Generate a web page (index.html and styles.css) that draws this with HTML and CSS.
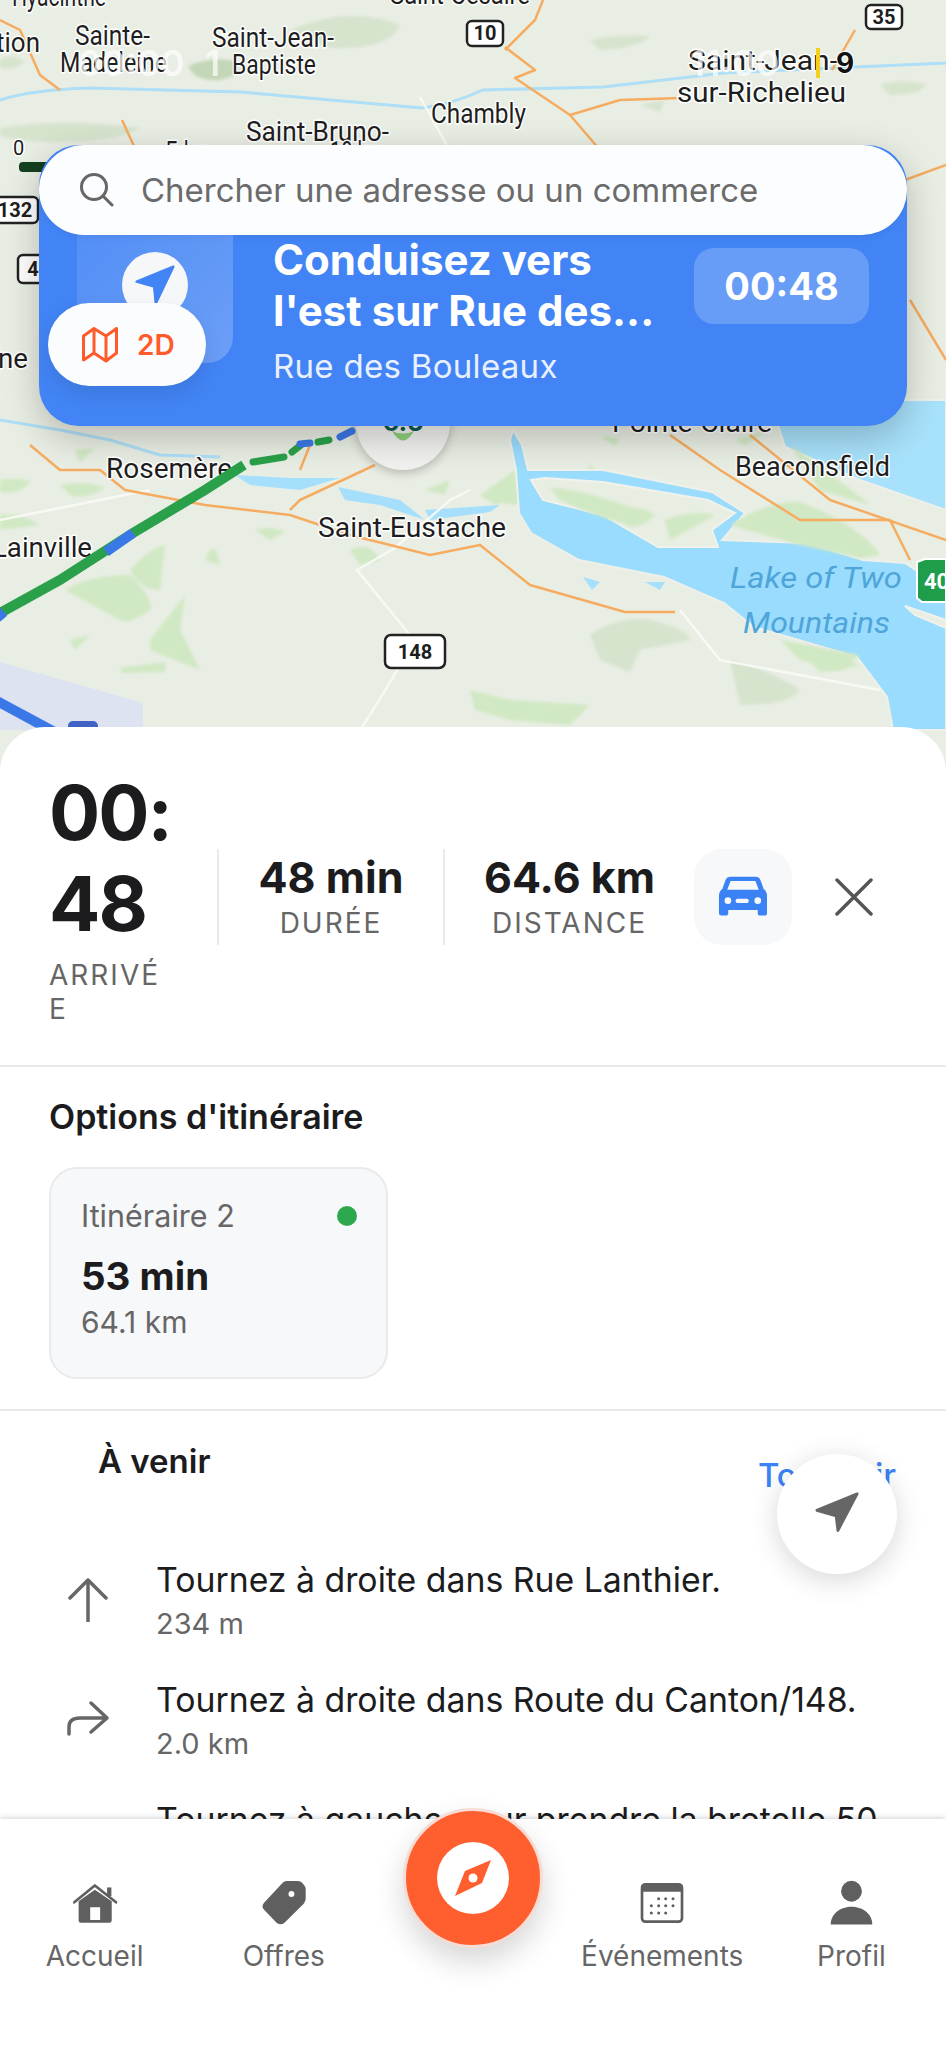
FILE: index.html
```html
<!DOCTYPE html>
<html lang="fr">
<head>
<meta charset="utf-8">
<title>Navigation</title>
<link rel="stylesheet" href="styles.css">
</head>
<body>
<div class="app">
  <section class="map">
    <svg class="map-art" viewBox="0 0 946 780" width="946" height="780" xmlns="http://www.w3.org/2000/svg">
      <rect class="land" x="0" y="0" width="946" height="780"/>
      <g class="soft">
        <path class="green-dim" d="M290 30 Q350 5 400 25 Q390 50 330 48 Z"/>
        <path class="green-dark" d="M188 66 Q215 55 238 62 Q242 76 220 80 Q195 82 188 66 Z"/>
        <path class="green-dim" d="M0 128 Q60 118 140 128 Q120 142 50 142 Q20 142 0 136 Z"/>
        <path class="green-dim" d="M590 40 Q620 34 650 36 Q640 48 600 50 Z"/>
        <path class="green-dim" d="M880 85 Q900 78 925 84 Q925 94 890 95 Z"/>
        <path class="green-dim" d="M640 105 L665 100 L660 112 Z"/>
        <path class="green-dim" d="M0 60 Q12 52 25 62 Q15 70 0 68 Z"/>
        <path class="green-dim" d="M600 38 Q610 34 620 40 L610 44 Z"/>
        <path class="green" d="M75 450 L95 448 L80 462 Z"/>
        <path class="green" d="M60 485 Q85 480 105 488 Q85 500 70 495 Z"/>
        <path class="green" d="M0 480 Q20 476 30 482 Q20 495 0 492 Z"/>
        <path class="green" d="M0 515 Q20 512 40 525 L0 530 Z"/>
        <path class="green" d="M160 590 L165 545 Q150 548 130 570 Q140 590 160 590 Z"/>
        <path class="green" d="M65 590 Q90 575 130 575 Q155 600 150 610 Q130 625 120 620 Z"/>
        <path class="green" d="M150 640 L185 595 L180 630 L200 670 Q175 660 150 650 Z"/>
        <path class="green" d="M120 668 L165 662 L165 672 L122 673 Z"/>
        <path class="green" d="M70 640 L90 635 L75 650 Z"/>
        <path class="green" d="M205 560 Q215 535 220 565 Z"/>
        <path class="green" d="M255 530 Q270 525 285 532 L270 540 Z"/>
        <path class="green" d="M425 490 L450 480 L445 495 Z"/>
        <path class="green" d="M480 495 L515 470 L520 495 L495 505 Z"/>
        <path class="green" d="M485 500 L525 495 L515 505 Z"/>
        <path class="green" d="M350 550 Q370 540 380 560 L360 565 Z"/>
        <path class="green-dim" d="M590 635 Q620 615 650 620 Q690 630 690 640 L640 650 L630 672 L600 660 Z"/>
        <path class="green" d="M470 690 L510 700 L590 705 L570 725 L510 720 L475 710 Z"/>
        <path class="green-dim" d="M730 660 Q770 670 800 690 Q790 705 740 705 Z"/>
        <path class="green" d="M800 650 Q830 650 860 665 L840 670 L820 672 Z"/>
        <path class="green" d="M590 465 L600 475 L585 480 Z"/>
        <path class="green" d="M735 440 L770 430 L745 445 Z"/>
        <path class="green" d="M600 436 L620 438 L615 446 Z"/>
        <path class="green" d="M505 700 L520 705 L510 715 Z"/>
      </g>
      <path class="lavender" d="M0 662 L143 703 L143 730 L0 730 Z"/>
      <path class="water-light" d="M770 400 L785 447 L860 480 L946 510 L946 400 Z"/>
      <path class="water" d="M513 430 L522 445 L528 470 L603 470 L712 492 L745 513 L722 540 L809 543 L863 560 L905 563 L946 590 L946 730 L893 730 L887 697 L857 657 L754 627 L724 603 L664 577 L579 560 L531 533 L519 513 L516 470 L510 440 Z"/>
      <path class="shore" d="M531 480 L543 500 L603 515 L658 547 L718 547 L712 530 L735 513 L708 500 L603 482 L545 478 Z"/>
      <path class="shore" d="M905 606 L946 620 L946 628 L915 615 Z"/>
      <g class="soft">
        <path class="green" d="M550 488 Q590 490 650 515 L630 525 Q590 515 560 500 Z"/>
        <path class="green" d="M615 508 Q640 505 655 515 Q640 530 625 525 Z"/>
        <path class="green" d="M665 520 Q690 510 715 515 L670 540 Z"/>
        <path class="green" d="M730 525 Q770 500 800 502 Q860 525 880 555 L860 558 L800 545 Z"/>
        <path class="green" d="M780 640 L860 655 L840 670 L800 660 Z"/>
        <path class="green" d="M790 445 Q840 480 870 505 L820 490 Z"/>
      </g>
      <g class="rivers">
        <path d="M0 100 Q30 90 90 88 L241 92 L422 108 Q450 105 483 90 L603 87 L724 73 L946 63"/>
        <path d="M0 420 L60 430 L110 440 L160 455 L220 457"/>
      </g>
      <g class="lakes">
        <path d="M338 487 L400 500 L425 520 L380 505 L345 500 Z"/>
        <path d="M235 475 L290 478 L340 478 L300 490 L250 485 Z"/>
        <path d="M425 510 L500 505 L490 512 L430 520 Z"/>
        <path d="M583 577 L600 582 L592 590 Z"/>
        <path d="M645 582 L665 582 L660 590 Z"/>
      </g>
      <g class="roads-white">
        <path d="M420 97 L455 160 L460 145"/>
        <path d="M400 665 Q380 700 360 730"/>
        <path d="M410 635 L357 570 L395 548 L450 500 L470 490"/>
        <path d="M0 520 L150 490"/>
        <path d="M680 610 L720 660 L880 690"/>
      </g>
      <g class="roads">
        <path d="M0 20 L20 30 L40 75 L60 90"/>
        <path d="M122 120 L145 170 L170 205"/>
        <path d="M505 50 L535 20 L543 0"/>
        <path d="M505 47 L535 70 L515 78 L570 115 L600 150"/>
        <path d="M570 115 L620 100 L680 98"/>
        <path d="M832 70 L855 30"/>
        <path d="M905 180 L946 165"/>
        <path d="M910 300 L946 360"/>
        <path d="M310 445 L300 470"/>
        <path d="M30 445 L60 470 L100 470 L125 490 L205 505 L290 515 L350 535 L430 555 L480 545 L530 585 L625 612 L675 612"/>
        <path d="M290 510 L300 500 L375 465"/>
        <path d="M670 435 L720 470 L800 520 L890 520 L910 560"/>
        <path d="M750 435 L830 500 L946 540"/>
      </g>

      <g class="marker">
        <circle class="marker-body" cx="403" cy="423" r="47"/>
        <text class="marker-text" x="403" y="431" text-anchor="middle">6.5</text>
        <path class="marker-smile" d="M392 431 Q403 450 414 431 Q403 436 392 431 Z"/>
      </g>

      <g class="labels">
        <text x="12" y="6" textLength="94" lengthAdjust="spacingAndGlyphs">Hyacinthe</text>
        <text x="-4" y="52" textLength="44" lengthAdjust="spacingAndGlyphs">tion</text>
        <text x="75" y="45" textLength="75" lengthAdjust="spacingAndGlyphs">Sainte-</text>
        <text x="60" y="72" textLength="107" lengthAdjust="spacingAndGlyphs">Madeleine</text>
        <text x="212" y="47" textLength="122" lengthAdjust="spacingAndGlyphs">Saint-Jean-</text>
        <text x="232" y="74" textLength="84" lengthAdjust="spacingAndGlyphs">Baptiste</text>
        <text x="390" y="4" textLength="140" lengthAdjust="spacingAndGlyphs">Saint-Césaire</text>
        <text x="688" y="70" textLength="150" lengthAdjust="spacingAndGlyphs">Saint-Jean-</text>
        <text x="677" y="102" textLength="169" lengthAdjust="spacingAndGlyphs">sur-Richelieu</text>
        <text x="431" y="123" textLength="95" lengthAdjust="spacingAndGlyphs">Chambly</text>
        <text x="246" y="141" textLength="143" lengthAdjust="spacingAndGlyphs">Saint-Bruno-</text>
        <text x="166" y="161" textLength="44" lengthAdjust="spacingAndGlyphs">Eden</text>
        <text x="330" y="161" textLength="55" lengthAdjust="spacingAndGlyphs">10 km</text>
        <text x="-2" y="368" textLength="30" lengthAdjust="spacingAndGlyphs">ne</text>
        <text x="106" y="478" textLength="126" lengthAdjust="spacingAndGlyphs">Rosemère</text>
        <text x="735" y="476" textLength="155" lengthAdjust="spacingAndGlyphs">Beaconsfield</text>
        <text x="612" y="432" textLength="160" lengthAdjust="spacingAndGlyphs">Pointe-Claire</text>
        <text x="318" y="537" textLength="188" lengthAdjust="spacingAndGlyphs">Saint-Eustache</text>
        <text x="-8" y="557" textLength="100" lengthAdjust="spacingAndGlyphs">Lainville</text>
        <text class="scale" x="13" y="155">0</text>
      </g>
      <g class="lake-labels">
        <text x="730" y="588" textLength="172" lengthAdjust="spacingAndGlyphs">Lake of Two</text>
        <text x="743" y="633" textLength="147" lengthAdjust="spacingAndGlyphs">Mountains</text>
      </g>

      <g class="route">
        <path class="rt-green rt-main" d="M0 613 L60 580 L133 533 L205 490 L244 465"/>
        <path class="rt-blue rt-main" d="M106 552 L133 533"/>
        <path class="rt-blue rt-main" d="M-8 622 L4 612"/>
        <path class="rt-green" d="M253 462 L284 457"/>
        <path class="rt-green" d="M292 452 L301 445"/>
        <path class="rt-blue" d="M300 444 L310 443"/>
        <path class="rt-green" d="M318 442 L329 440"/>
        <path class="rt-blue" d="M340 437 L352 431"/>
        <path class="rt-blue rt-main" d="M-5 700 L60 735"/>
      </g>
      <rect class="rt-badge" x="68" y="721" width="30" height="30" rx="5"/>

      <rect class="scale-bar" x="19" y="162" width="40" height="10" rx="4"/>

      <g class="shields">
        <rect x="467" y="21" width="36" height="25" rx="5"/><text x="485" y="40" text-anchor="middle">10</text>
        <rect x="866" y="5" width="36" height="24" rx="5"/><text x="884" y="24" text-anchor="middle">35</text>
        <rect x="-8" y="197" width="46" height="26" rx="5"/><text x="15" y="217" text-anchor="middle">132</text>
        <rect x="18" y="255" width="30" height="28" rx="5"/><text x="33" y="276" text-anchor="middle">4</text>
        <rect x="385" y="635" width="60" height="33" rx="6"/><text x="415" y="659" text-anchor="middle">148</text>
      </g>
      <path class="shield-green" d="M917 562 L925 559 L946 559 L946 602 L922 602 L917 598 Z"/>
      <text class="shield-green-text" x="924" y="589">40</text>

      <g class="status">
        <text class="status-ghost" x="78" y="76">00:00</text>
        <text class="status-ghost" x="205" y="76">1</text>
        <text class="status-ghost" x="690" y="76">11:00</text>
        <rect class="status-bar" x="816" y="48" width="4" height="30"/>
        <text class="status-nine" x="836" y="73">9</text>
      </g>
    </svg>

    <div class="banner">
      <div class="search">
        <svg class="search-icon" viewBox="0 0 34 34" width="34" height="34"><circle cx="14" cy="14" r="12.5"/><path d="M23.5 23.5 L32 32"/></svg>
        <span class="search-text">Chercher une adresse ou un commerce</span>
      </div>
      <div class="tile">
        <span class="tile-circle">
          <svg viewBox="0 0 48 48" width="40" height="40"><path class="nav-fill-blue" d="M46 2 L2 20 L23 26 L25 46 Z"/></svg>
        </span>
      </div>
      <div class="banner-text">
        <div class="banner-title">Conduisez vers<br>l'est sur Rue des...</div>
        <div class="banner-sub">Rue des Bouleaux</div>
      </div>
      <div class="chip">00:48</div>
      <div class="mode-pill">
        <svg class="mode-icon" viewBox="0 0 36 36" width="36" height="36"><path d="M1.500 9 L12 1.500 L24 9 L34.500 1.500 L34.500 26 L24 34 L12 26 L1.500 33 Z M12 1.500 L12 26 M24 9 L24 34"/></svg>
        <span class="mode-text">2D</span>
      </div>
    </div>
  </section>

  <main class="sheet">
    <section class="trip">
      <div class="arrival">
        <div class="arrival-time">00:<wbr>48</div>
        <div class="arrival-label">ARRIVÉE</div>
      </div>
      <div class="stat stat-duration">
        <div class="stat-value">48 min</div>
        <div class="stat-label">DURÉE</div>
      </div>
      <div class="stat stat-distance">
        <div class="stat-value">64.6 km</div>
        <div class="stat-label">DISTANCE</div>
      </div>
      <div class="car-btn">
        <svg viewBox="100 160 175 135" width="58" height="45"><path class="car-fill" d="M150 168 L225 168 Q236 168 240 178 L250 205 Q260 212 260 226 L260 278 Q260 285 252 285 L240 285 Q232 285 232 278 L232 268 L143 268 L143 278 Q143 285 135 285 L122 285 Q115 285 115 278 L115 226 Q115 212 125 205 L135 178 Q139 168 150 168 Z"/><path class="car-cut" d="M150 181 L225 181 L235 207 L140 207 Z"/><circle class="car-cut" cx="142" cy="240" r="10"/><circle class="car-cut" cx="232" cy="240" r="10"/><rect class="car-cut" x="165" y="234" width="40" height="13" rx="6"/></svg>
      </div>
      <div class="close-btn">
        <svg viewBox="0 0 38 38" width="38" height="38"><path d="M2 2 L36 36 M36 2 L2 36"/></svg>
      </div>
    </section>

    <section class="options">
      <h2 class="options-title">Options d'itinéraire</h2>
      <div class="route-card">
        <div class="route-card-head"><span class="route-name">Itinéraire 2</span><span class="route-dot"></span></div>
        <div class="route-time">53 min</div>
        <div class="route-dist">64.1 km</div>
      </div>
    </section>

    <section class="upcoming">
      <div class="upcoming-head">
        <h2 class="upcoming-title">À venir</h2>
        <span class="see-all">Tout voir</span>
      </div>
      <ul class="steps">
        <li class="step">
          <svg class="step-icon" viewBox="0 0 44 44" width="44" height="44"><path d="M22 43 L22 2 M4 20 L22 2 L40 20"/></svg>
          <div><div class="step-title">Tournez à droite dans Rue Lanthier.</div><div class="step-dist">234 m</div></div>
        </li>
        <li class="step">
          <svg class="step-icon" viewBox="0 0 44 44" width="44" height="44"><path d="M3 36 L3 29 Q3 20 14 20 L41 20 M25 5 L41 20 L25 34"/></svg>
          <div><div class="step-title">Tournez à droite dans Route du Canton/148.</div><div class="step-dist">2.0 km</div></div>
        </li>
        <li class="step">
          <svg class="step-icon" viewBox="0 0 44 44" width="44" height="44"></svg>
          <div><div class="step-title">Tournez à gauche pour prendre la bretelle 50</div><div class="step-dist">1.2 km</div></div>
        </li>
      </ul>
    </section>

    <button class="locate-fab" type="button" aria-label="Recentrer">
      <svg viewBox="0 0 48 48" width="48" height="44"><path class="nav-fill-gray" d="M46 2 L2 20 L23 26 L25 42 Z"/></svg>
    </button>
  </main>

  <nav class="tabbar">
    <a class="tab">
      <svg class="tab-icon" viewBox="120 180 145 130" width="48" height="43"><path class="tab-fill" d="M143 240 L192 205 L243 240 L243 298 Q243 305 236 305 L150 305 Q143 305 143 298 Z M178 258 L178 296 L208 296 L208 258 Z" fill-rule="evenodd"/><path class="tab-line" d="M130 243 L192 192 L256 243"/><rect class="tab-fill" x="229" y="198" width="13" height="26"/></svg>
      <span class="tab-label">Accueil</span>
    </a>
    <a class="tab">
      <svg class="tab-icon" viewBox="690 172 145 145" width="48" height="48"><path class="tab-fill" fill-rule="evenodd" d="M770 178 L805 178 Q815 178 820 186 L826 195 Q828 198 828 204 L828 232 Q828 240 822 247 L764 304 Q752 314 740 304 L703 266 Q692 255 703 243 L755 187 Q762 178 770 178 Z M785 208 A9 9 0 1 0 785 226 A9 9 0 1 0 785 208 Z"/></svg>
      <span class="tab-label">Offres</span>
    </a>
    <div class="tab tab-center">
      <span class="compass-btn">
        <span class="compass-face">
          <svg viewBox="-24 -24 48 48" width="48" height="48"><path class="compass-needle" d="M18 -18 L9 5 L-18 18 L-8 -7 Z"/><circle class="compass-dot" cx="0" cy="0" r="4.500"/></svg>
        </span>
      </span>
    </div>
    <a class="tab">
      <svg class="tab-icon" viewBox="236 241 138 130" width="46" height="43"><rect class="cal-frame" x="245" y="250" width="120" height="112" rx="10"/><path class="tab-fill" d="M245 260 Q245 250 255 250 L355 250 Q365 250 365 260 L365 272 L245 272 Z"/><g class="tab-fill"><circle cx="295" cy="293" r="4.500"/><circle cx="316" cy="293" r="4.500"/><circle cx="338" cy="293" r="4.500"/><circle cx="273" cy="314" r="4.500"/><circle cx="295" cy="314" r="4.500"/><circle cx="316" cy="314" r="4.500"/><circle cx="338" cy="314" r="4.500"/><circle cx="273" cy="336" r="4.500"/><circle cx="295" cy="336" r="4.500"/><circle cx="316" cy="336" r="4.500"/></g></svg>
      <span class="tab-label">Événements</span>
    </a>
    <a class="tab">
      <svg class="tab-icon" viewBox="805 235 140 140" width="47" height="47"><circle class="tab-fill" cx="875" cy="270" r="31"/><path class="tab-fill" d="M813 369 C813 335 845 316 875 316 C905 316 937 335 937 369 Z"/></svg>
      <span class="tab-label">Profil</span>
    </a>
  </nav>
</div>
</body>
</html>
```

FILE: styles.css
```css
* { box-sizing: border-box; }
html, body { margin: 0; padding: 0; background: #fff; }
body { font-family: Inter, "Noto Sans", "Liberation Sans", sans-serif; color: #1c1c1e; }

.app { width: 946px; height: 2047px; overflow: hidden; display: flex; flex-direction: column; position: relative; }

/* map */
.map { position: relative; height: 780px; flex: none; overflow: visible; }
.map-art { display: block; }
.land { fill: #e9eee4; }
.soft { filter: blur(1.500px); }
.green { fill: #d0e8c3; }
.green-dim { fill: #d6e3cd; }
.green-dark { fill: #c3d6b7; }
.water { fill: #9adcfd; stroke: #eef0ea; stroke-width: 2; }
.water-light { fill: #a8e1fb; stroke: #eef0ea; stroke-width: 2; }
.shore { fill: #e8eee2; stroke: #f1f2ec; stroke-width: 2; }
.lavender { fill: #dde3f1; }
.rivers path { fill: none; stroke: #aedff6; stroke-width: 3; stroke-linejoin: round; }
.lakes path { fill: #a6dffc; }
.roads-white path { fill: none; stroke: #fafaf7; stroke-width: 2.500; opacity: .85; }
.roads path { fill: none; stroke: #f6ac60; stroke-width: 2.500; stroke-linejoin: round; }
.route path { fill: none; stroke-linecap: round; stroke-width: 7; }
.route .rt-main { stroke-linecap: butt; stroke-width: 10; }
.rt-green { stroke: #2aa04a; }
.rt-blue { stroke: #3b78e7; }
.rt-badge { fill: #3f63c4; }
.marker-body { fill: #f1f1ef; filter: drop-shadow(0 3px 5px rgba(0,0,0,.22)); }
.marker-text { font: 700 26px Inter, sans-serif; fill: #0e5a54; }
.marker-smile { fill: #8ed07c; }
.labels text { font: 400 28px Roboto, sans-serif; fill: #1e1e1e; stroke: #fff; stroke-width: 3; paint-order: stroke; stroke-linejoin: round; }
.labels .scale { font-size: 20px; }
.lake-labels text { font: italic 400 30px Roboto, sans-serif; fill: #4fa5d9; }
.scale-bar { fill: #14401f; }
.shields rect { fill: #fff; stroke: #222; stroke-width: 2.500; }
.shields text { font: 700 20px Roboto, sans-serif; fill: #1e1e1e; }
.shield-green { fill: #1f9d4a; stroke: #fff; stroke-width: 2; }
.shield-green-text { font: 700 22px Roboto, sans-serif; fill: #fff; }
.status-ghost { font: 600 36px Inter, sans-serif; fill: #fff; opacity: .7; }
.status-bar { fill: #f5cf1d; }
.status-nine { font: 700 28px Inter, sans-serif; fill: #111; stroke: #fff; stroke-width: 2; paint-order: stroke; }

/* banner */
.banner { position: absolute; left: 39px; top: 145px; width: 868px; height: 281px; border-radius: 40px; background: #4284f5; box-shadow: 0 12px 36px rgba(0,0,0,.22); display: flex; align-items: flex-start; padding: 62px 38px 0; }
.search { position: absolute; z-index: 2; left: 0; top: 0; width: 868px; height: 90px; border-radius: 45px; background: #fcfdfe; display: flex; align-items: center; padding-left: 41px; gap: 27px; box-shadow: 0 2px 6px rgba(0,0,0,.06); }
.search-icon { flex: none; }
.search-icon circle, .search-icon path { fill: none; stroke: #666; stroke-width: 3; stroke-linecap: round; }
.search-text { font-size: 33px; color: #6b6b6b; white-space: nowrap; }
.tile { width: 156px; height: 156px; flex: none; border-radius: 26px; background: linear-gradient(135deg, rgba(255,255,255,.08), rgba(255,255,255,.22)); display: flex; align-items: center; justify-content: center; }
.tile-circle { width: 66px; height: 66px; border-radius: 50%; background: #f6f7f8; display: flex; align-items: center; justify-content: center; }
.nav-fill-blue { fill: #4284f5; stroke: #4284f5; stroke-width: 3; stroke-linejoin: round; }
.banner-text { margin-left: 40px; margin-top: 27px; flex: 1; min-width: 0; }
.banner-title { font-size: 42px; font-weight: 700; line-height: 51px; color: #fff; white-space: nowrap; }
.banner-sub { font-size: 33px; line-height: 40px; letter-spacing: .3px; color: #e8f0fe; margin-top: 10px; white-space: nowrap; }
.chip { flex: none; width: 175px; height: 76px; margin-top: 41px; border-radius: 20px; background: rgba(255,255,255,.2); color: #fff; font-size: 38px; font-weight: 700; display: flex; align-items: center; justify-content: center; }
.mode-pill { position: absolute; z-index: 3; left: 9px; top: 158px; width: 158px; height: 83px; border-radius: 42px; background: #fbfcfd; display: flex; align-items: center; gap: 19px; padding-left: 34px; box-shadow: 0 8px 20px rgba(0,0,0,.1); }
.mode-icon path { fill: none; stroke: #ff5a2b; stroke-width: 3; stroke-linejoin: round; }
.mode-text { font-size: 28px; font-weight: 600; color: #ff5a2b; }

/* sheet */
.sheet { position: relative; z-index: 1; flex: none; height: 1092px; margin-top: -53px; background: #fff; border-radius: 45px 45px 0 0; overflow: hidden; }
.trip { display: flex; align-items: center; padding: 40px 0 39px 49px; border-bottom: 2px solid #e8eaec; }
.arrival { width: 119px; flex: none; margin-right: 49px; }
.arrival-time { font-size: 76px; line-height: 91px; font-weight: 700; letter-spacing: -2px; color: #1c1c1e; }
.arrival-label { font-size: 28px; line-height: 34px; margin-top: 9px; letter-spacing: 2px; color: #666; overflow-wrap: anywhere; }
.stat { height: 96px; flex: none; border-left: 2px solid #e8eaec; display: flex; flex-direction: column; align-items: center; justify-content: center; }
.stat-duration { width: 226px; }
.stat-distance { width: 251px; }
.stat-value { font-size: 43px; line-height: 48px; font-weight: 700; color: #1c1c1e; white-space: nowrap; }
.stat-label { font-size: 28px; line-height: 36px; letter-spacing: 2px; color: #666; margin-top: 4px; }
.car-btn { width: 98px; height: 96px; flex: none; border-radius: 28px; background: #f6f8fa; display: flex; align-items: center; justify-content: center; }
.car-fill { fill: #3b82f6; }
.car-cut { fill: #f6f8fa; }
.close-btn { width: 96px; height: 96px; flex: none; margin-left: 14px; display: flex; align-items: center; justify-content: center; }
.close-btn path { fill: none; stroke: #555; stroke-width: 3.500; stroke-linecap: round; }

.options { padding: 30px 49px 30px; border-bottom: 2px solid #e8eaec; }
.options-title { margin: 0 0 30px; font-size: 34px; line-height: 40px; font-weight: 600; color: #1c1c1e; }
.route-card { width: 339px; height: 212px; border: 2px solid #e8eaec; border-radius: 28px; background: #f7f8fa; padding: 29px 29px 0 30px; }
.route-card-head { display: flex; align-items: center; justify-content: space-between; }
.route-name { font-size: 30.500px; line-height: 36px; color: #666; }
.route-dot { width: 20px; height: 20px; border-radius: 50%; background: #2ea84f; }
.route-time { font-size: 38.500px; line-height: 48px; font-weight: 700; margin-top: 18px; color: #1c1c1e; }
.route-dist { font-size: 30px; line-height: 36px; margin-top: 4px; color: #666; }

.upcoming { padding-top: 30px; }
.upcoming-head { display: flex; justify-content: space-between; align-items: flex-start; padding: 0 50px 0 98px; }
.upcoming-title { margin: 0; font-size: 33px; line-height: 40px; font-weight: 600; color: #1c1c1e; }
.see-all { font-size: 33px; line-height: 40px; margin-top: 14px; color: #3b82f6; font-weight: 500; }
.steps { list-style: none; margin: 63px 0 0; padding: 0 0 0 66px; display: flex; flex-direction: column; gap: 36px; }
.step { display: flex; align-items: center; gap: 46px; }
.step-icon { flex: none; }
.step-icon path { fill: none; stroke: #666; stroke-width: 3.500; stroke-linecap: round; stroke-linejoin: round; }
.step-title { font-size: 33.800px; line-height: 44px; color: #1c1c1e; white-space: nowrap; }
.step-dist { font-size: 29px; line-height: 36px; margin-top: 4px; color: #666; }

.locate-fab { position: absolute; left: 777px; top: 727px; width: 120px; height: 120px; border: 0; border-radius: 50%; background: #fff; box-shadow: 0 6px 28px rgba(0,0,0,.16); display: flex; align-items: center; justify-content: center; padding: 0; }
.nav-fill-gray { fill: #666; stroke: #666; stroke-width: 3; stroke-linejoin: round; }

/* tab bar */
.tabbar { position: relative; z-index: 2; flex: 1; background: #fff; display: grid; grid-template-columns: repeat(5, 1fr); box-shadow: 0 -1px 6px rgba(0,0,0,.18); }
.tab { display: flex; flex-direction: column; align-items: center; padding-top: 60px; }
.tab-icon { height: 48px; flex: none; }
.tab-fill { fill: #5f5f5f; }
.tab-line { fill: none; stroke: #5f5f5f; stroke-width: 8; stroke-linecap: round; stroke-linejoin: round; }
.cal-frame { fill: #fff; stroke: #5f5f5f; stroke-width: 8; }
.tab-label { font-size: 28px; line-height: 36px; color: #666; margin-top: 11px; white-space: nowrap; }
.tab-center { padding-top: 0; }
.compass-btn { width: 140px; height: 140px; margin-top: -11px; border-radius: 50%; background: #ff5f2e; border: 3px solid #f6dcd4; box-shadow: 0 14px 30px rgba(0,0,0,.16); display: flex; align-items: center; justify-content: center; }
.compass-face { width: 72px; height: 72px; border-radius: 50%; background: #fff; display: flex; align-items: center; justify-content: center; }
.compass-needle { fill: #ff5f2e; }
.compass-dot { fill: #fff; }
```
